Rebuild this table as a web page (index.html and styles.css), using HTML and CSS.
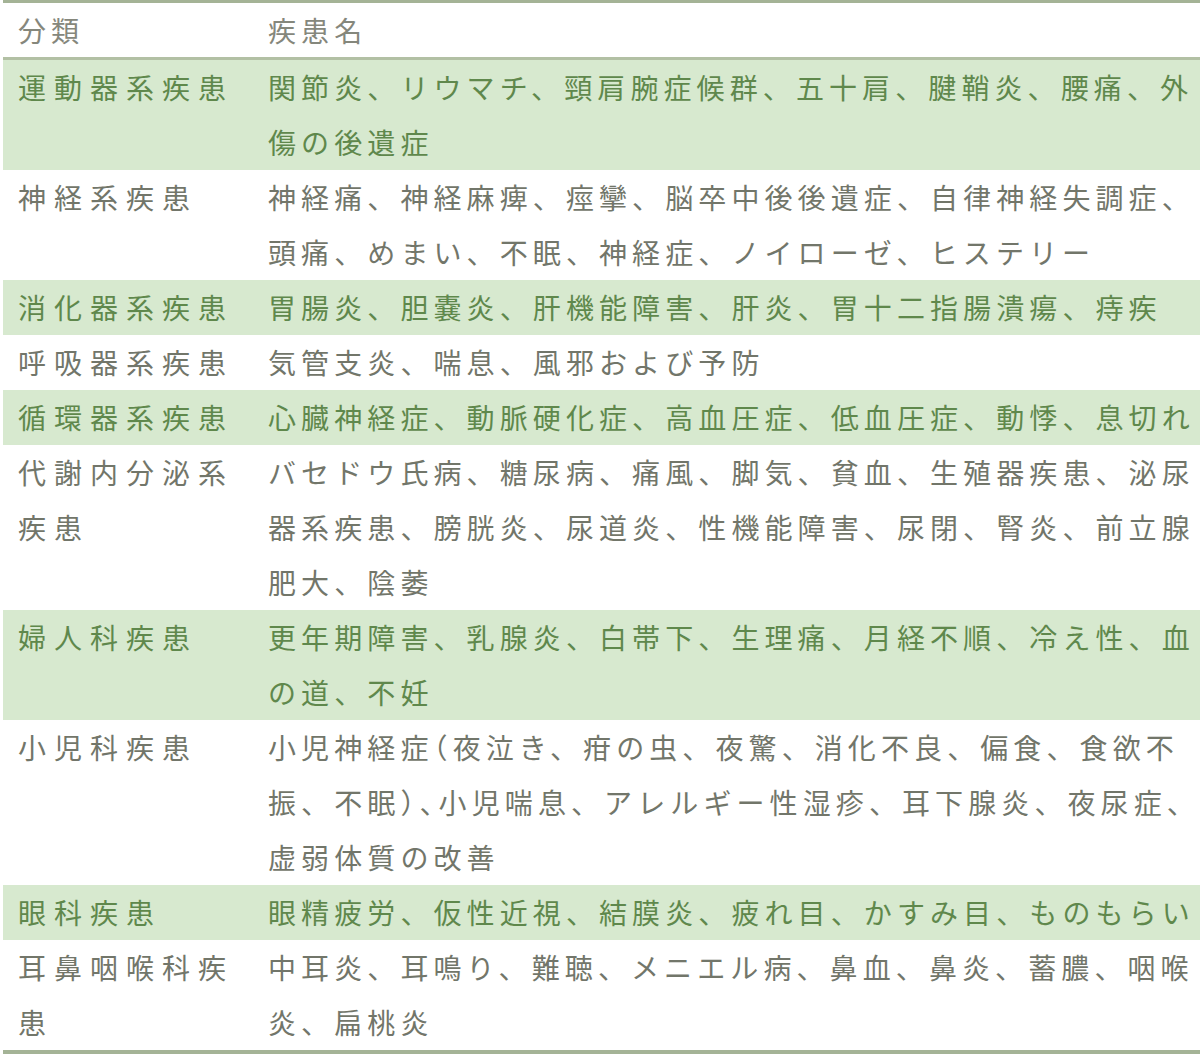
FILE: index.html
```html
<!DOCTYPE html>
<html lang="ja">
<head>
<meta charset="utf-8">
<title>分類と疾患名</title>
<link rel="stylesheet" href="styles.css">
</head>
<body>
<table class="disease-table">
  <thead>
    <tr><th class="cat">分類</th><th class="names">疾患名</th></tr>
  </thead>
  <tbody>
    <tr class="shade"><td class="cat">運動器系疾患</td><td class="names">関節炎、リウマチ、頸肩腕症候群、五十肩、腱鞘炎、腰痛、外傷の後遺症</td></tr>
    <tr><td class="cat">神経系疾患</td><td class="names">神経痛、神経麻痺、痙攣、脳卒中後後遺症、自律神経失調症、頭痛、めまい、不眠、神経症、ノイローゼ、ヒステリー</td></tr>
    <tr class="shade"><td class="cat">消化器系疾患</td><td class="names">胃腸炎、胆嚢炎、肝機能障害、肝炎、胃十二指腸潰瘍、痔疾</td></tr>
    <tr><td class="cat">呼吸器系疾患</td><td class="names">気管支炎、喘息、風邪および予防</td></tr>
    <tr class="shade"><td class="cat">循環器系疾患</td><td class="names">心臓神経症、動脈硬化症、高血圧症、低血圧症、動悸、息切れ</td></tr>
    <tr><td class="cat">代謝内分泌系疾患</td><td class="names">バセドウ氏病、糖尿病、痛風、脚気、貧血、生殖器疾患、泌尿器系疾患、膀胱炎、尿道炎、性機能障害、尿閉、腎炎、前立腺肥大、陰萎</td></tr>
    <tr class="shade"><td class="cat">婦人科疾患</td><td class="names">更年期障害、乳腺炎、白帯下、生理痛、月経不順、冷え性、血の道、不妊</td></tr>
    <tr><td class="cat">小児科疾患</td><td class="names">小児神経症<span class="tsume">（</span>夜泣き、疳の虫、夜驚、消化不良、偏食、食欲不振、不眠<span class="tsume">）、</span>小児喘息、アレルギー性湿疹、耳下腺炎、夜尿症、虚弱体質の改善</td></tr>
    <tr class="shade"><td class="cat">眼科疾患</td><td class="names">眼精疲労、仮性近視、結膜炎、疲れ目、かすみ目、ものもらい</td></tr>
    <tr><td class="cat">耳鼻咽喉科疾患</td><td class="names">中耳炎、耳鳴り、難聴、メニエル病、鼻血、鼻炎、蓄膿、咽喉炎、扁桃炎</td></tr>
  </tbody>
</table>
</body>
</html>
```

FILE: styles.css
```css
html, body {
  margin: 0;
  padding: 0;
  background: #ffffff;
}

body {
  font-family: "Noto Sans CJK JP", "Noto Sans", sans-serif;
}

.disease-table {
  margin-left: 3px;
  width: 1197px;
  border-collapse: collapse;
  table-layout: fixed;
  border-top: 3px solid #a4b396;
  border-bottom: 4px solid #a4b396;
  font-size: 28px;
  line-height: 55px;
}

.disease-table th,
.disease-table td {
  padding: 0;
  text-align: left;
  vertical-align: top;
  font-weight: 400;
}

.disease-table thead th {
  height: 54px;
  line-height: 54px;
  color: #85877c;
  border-bottom: 3px solid #b2c0a4;
}

.disease-table .cat {
  width: 225px;
  padding-left: 15px;
  padding-right: 25px;
  letter-spacing: 8px;
}

.disease-table thead .cat {
  letter-spacing: 5px;
}

.disease-table .names {
  letter-spacing: 5.1px;
  padding-right: 0;
}

.tsume {
  font-feature-settings: "halt" 1;
}

.disease-table tbody tr {
  color: #72766a;
}

.disease-table tbody tr.shade {
  background: #d7e9cf;
  color: #5f884c;
}
```
